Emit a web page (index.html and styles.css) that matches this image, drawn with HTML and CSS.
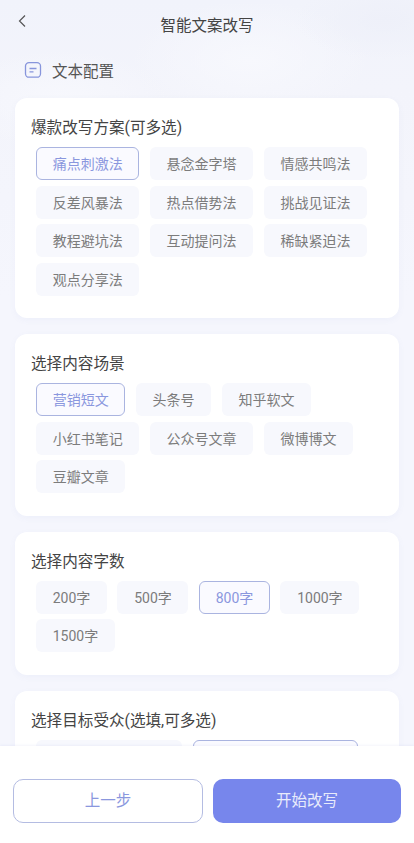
FILE: index.html
```html
<!DOCTYPE html>
<html lang="zh-CN">
<head>
    <meta charset="UTF-8">
    <meta name="viewport" content="width=device-width, initial-scale=1.0">
    <title>智能文案改写</title>
    <link rel="stylesheet" href="styles.css">
</head>
<body>

    <div class="app">
        <div class="content">
            <div class="header">
                <svg class="back" width="10" height="14" viewBox="0 0 10 14" fill="none">
                    <path d="M8 1.5L2.5 7L8 12.5" stroke="#555" stroke-width="1.2"/>
                </svg>
                <span class="header-title">智能文案改写</span>
            </div>

            <div class="section-head">
                <svg width="18" height="18" viewBox="0 0 18 18" fill="none">
                    <rect x="1.5" y="1.6" width="15" height="14.6" rx="3.5" stroke="#8795dc" stroke-width="1.3"/>
                    <path d="M5.5 7.5H12.5M5.5 10.8H9.5" stroke="#8795dc" stroke-width="1.3"/>
                </svg>
                <span>文本配置</span>
            </div>

            <div class="card">
                <div class="card-title">爆款改写方案(可多选)</div>
                <div class="chips">
                    <div class="chip active">痛点刺激法</div>
                    <div class="chip">悬念金字塔</div>
                    <div class="chip">情感共鸣法</div>
                    <div class="chip">反差风暴法</div>
                    <div class="chip">热点借势法</div>
                    <div class="chip">挑战见证法</div>
                    <div class="chip">教程避坑法</div>
                    <div class="chip">互动提问法</div>
                    <div class="chip">稀缺紧迫法</div>
                    <div class="chip">观点分享法</div>
                </div>
            </div>

            <div class="card">
                <div class="card-title">选择内容场景</div>
                <div class="chips">
                    <div class="chip active">营销短文</div>
                    <div class="chip">头条号</div>
                    <div class="chip">知乎软文</div>
                    <div class="chip">小红书笔记</div>
                    <div class="chip">公众号文章</div>
                    <div class="chip">微博博文</div>
                    <div class="chip">豆瓣文章</div>
                </div>
            </div>

            <div class="card">
                <div class="card-title">选择内容字数</div>
                <div class="chips">
                    <div class="chip">200字</div>
                    <div class="chip">500字</div>
                    <div class="chip active">800字</div>
                    <div class="chip">1000字</div>
                    <div class="chip">1500字</div>
                </div>
            </div>

            <div class="card">
                <div class="card-title">选择目标受众(选填,可多选)</div>
                <div class="chips">
                    <div class="chip chip-wide-a"></div>
                    <div class="chip active chip-wide-b"></div>
                </div>
            </div>
        </div>

        <div class="footer">
            <button class="btn btn-prev">上一步</button>
            <button class="btn btn-start">开始改写</button>
        </div>
    </div>

</body>
</html>
```

FILE: styles.css
```css
* {
    box-sizing: border-box;
}
body {
    margin: 0;
    font-family: Roboto, "Noto Sans CJK SC", sans-serif;
    color: #333;
}
.app {
    display: flex;
    flex-direction: column;
    height: 843px;
    overflow: hidden;
    background: #f5f6fd;
}
.content {
    flex: 1;
    min-height: 0;
    overflow: hidden;
    padding: 0 15px;
    background:
        radial-gradient(ellipse 90px 40px at 385px 20px, #eef0f9 0%, rgba(238, 240, 249, 0) 100%),
        radial-gradient(ellipse 120px 60px at 250px 60px, #f7f8fd 0%, rgba(247, 248, 253, 0) 100%),
        radial-gradient(ellipse 110px 50px at 60px 100px, #f7f8fd 0%, rgba(247, 248, 253, 0) 100%),
        linear-gradient(180deg, #f1f3fb 0, #f3f4fb 90px, #f5f6fd 300px);
}
.header {
    position: relative;
    height: 47px;
    display: flex;
    justify-content: center;
    align-items: center;
}
.back {
    position: absolute;
    left: 2px;
    top: 14px;
}
.header-title {
    font-size: 15.5px;
    color: #444;
}
.section-head {
    display: flex;
    align-items: center;
    gap: 10px;
    height: 46px;
    margin-bottom: 5px;
    padding-left: 9px;
    font-size: 15.5px;
    color: #555;
}
.card {
    background: #fff;
    border-radius: 12px;
    padding: 17px 16px 22.5px 16px;
    margin-bottom: 16px;
    box-shadow: 0 2px 6px rgba(120, 130, 200, 0.06);
}
.card-title {
    font-size: 15.6px;
    height: 32px;
    padding-top: 2px;
    line-height: 22px;
    color: #444;
}
.chips {
    display: flex;
    flex-wrap: wrap;
    gap: 5.5px 10.5px;
    padding-left: 5px;
}
.chip {
    height: 33px;
    line-height: 35px;
    padding: 0 16.7px;
    font-size: 14px;
    color: #7c7c7c;
    background: #f7f8fd;
    border-radius: 6px;
}
.chip.active {
    color: #8a97de;
    background: #fafaff;
    border: 1px solid #aab4e0;
    line-height: 33px;
    padding: 0 15.7px;
}
.chip-wide-a {
    width: 146px;
}
.chip-wide-b {
    width: 165px;
}
.footer {
    flex: none;
    height: 97px;
    display: flex;
    gap: 10px;
    padding: 33px 13px 0 13px;
    background: #fff;
    box-shadow: 0 -1px 2px rgba(120, 130, 200, 0.08);
    position: relative;
}
.btn {
    flex: 1;
    height: 44px;
    padding: 0 0 4px 0;
    border-radius: 10px;
    font-family: inherit;
    font-size: 15.5px;
    border: none;
}
.btn-prev {
    background: #fff;
    color: #8a97de;
    border: 1px solid #b4bce2;
}
.btn-start {
    background: #7786ec;
    color: #e8ebfb;
}
```
